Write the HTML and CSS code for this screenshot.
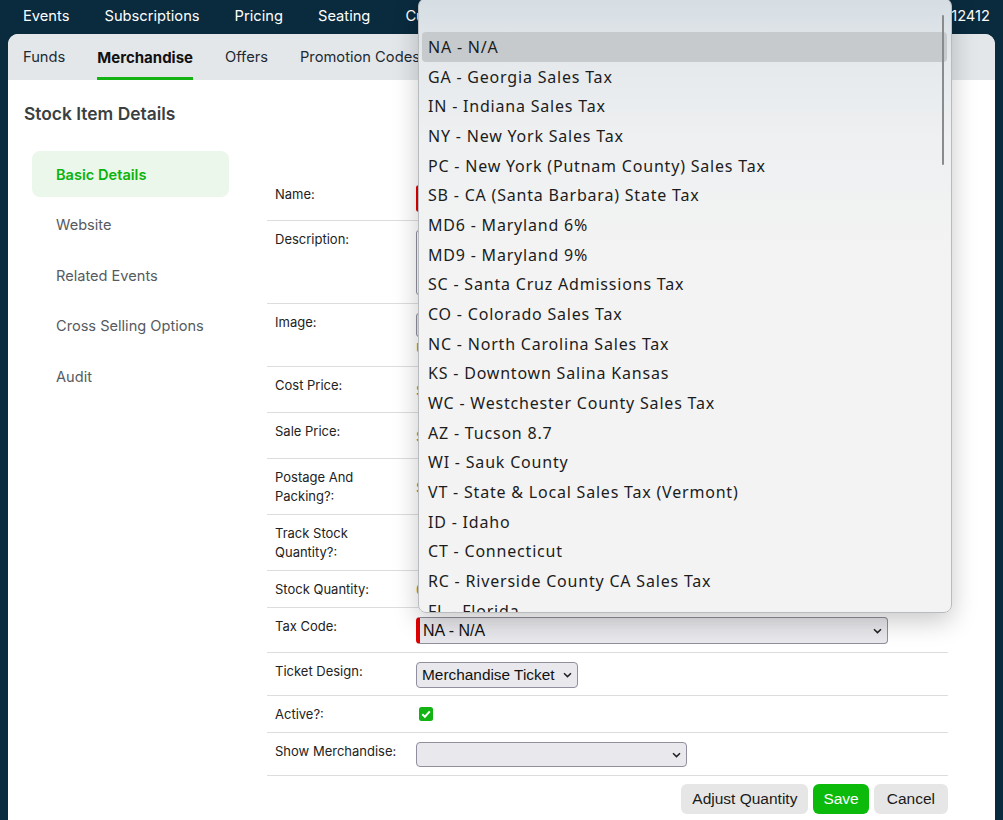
FILE: index.html
```html
<!DOCTYPE html>
<html>
<head>
<meta charset="utf-8">
<link rel="stylesheet" href="styles.css">
</head>
<body>
<nav class="topnav">
  <div class="navitems">
    <span>Events</span>
    <span>Subscriptions</span>
    <span>Pricing</span>
    <span>Seating</span>
    <span>Customers</span>
  </div>
  <span class="navright">Order 112412</span>
</nav>
<div class="panel">
  <div class="tabs">
    <span class="tab">Funds</span>
    <span class="tab active">Merchandise</span>
    <span class="tab">Offers</span>
    <span class="tab">Promotion Codes</span>
  </div>
  <div class="content">
    <aside class="side">
      <h2 class="side-title">Stock Item Details</h2>
      <ul class="menu">
        <li class="menu-item current">Basic Details</li>
        <li class="menu-item">Website</li>
        <li class="menu-item">Related Events</li>
        <li class="menu-item">Cross Selling Options</li>
        <li class="menu-item">Audit</li>
      </ul>
    </aside>
    <main class="form">
      <div class="row"><div class="label">Name:</div><div class="field"><div class="input required"></div></div></div>
      <div class="row"><div class="label">Description:</div><div class="field"><div class="textarea"></div></div></div>
      <div class="row"><div class="label">Image:</div><div class="field"><div class="filebtn"></div><div class="link">Upload</div></div></div>
      <div class="row"><div class="label">Cost Price:</div><div class="field money"><span class="cur">$</span><div class="input short"></div></div></div>
      <div class="row"><div class="label">Sale Price:</div><div class="field money"><span class="cur">$</span><div class="input short"></div></div></div>
      <div class="row"><div class="label">Postage And<br>Packing?:</div><div class="field money"><span class="cur">$</span></div></div>
      <div class="row"><div class="label">Track Stock<br>Quantity?:</div><div class="field"></div></div>
      <div class="row"><div class="label">Stock Quantity:</div><div class="field money"><span class="cur">0</span></div></div>
      <div class="row"><div class="label">Tax Code:</div><div class="field"><div class="select required wide"><span>NA - N/A</span><svg class="chev" width="9" height="6" viewBox="0 0 9 6"><path d="M1 1.2L4.5 4.6L8 1.2" fill="none" stroke="#222" stroke-width="1.5"/></svg></div></div></div>
      <div class="row"><div class="label">Ticket Design:</div><div class="field"><div class="select ticket"><span>Merchandise Ticket</span><svg class="chev" width="9" height="6" viewBox="0 0 9 6"><path d="M1 1.2L4.5 4.6L8 1.2" fill="none" stroke="#222" stroke-width="1.5"/></svg></div></div></div>
      <div class="row"><div class="label">Active?:</div><div class="field"><svg class="check" width="14" height="14" viewBox="0 0 14 14"><rect width="14" height="14" rx="2.5" fill="#12b312"/><path d="M3.3 7.2L5.9 9.7L10.8 4.4" fill="none" stroke="#fff" stroke-width="2"/></svg></div></div>
      <div class="row"><div class="label">Show Merchandise:</div><div class="field"><div class="select show"><span></span><svg class="chev" width="9" height="6" viewBox="0 0 9 6"><path d="M1 1.2L4.5 4.6L8 1.2" fill="none" stroke="#222" stroke-width="1.5"/></svg></div></div></div>
      <div class="actions">
        <button class="btn adjust">Adjust Quantity</button>
        <button class="btn primary">Save</button>
        <button class="btn cancel">Cancel</button>
      </div>
    </main>
  </div>
</div>
<div class="dropdown">
  <div class="scrollbar"></div>
  <div class="opt selected">NA - N/A</div>
  <div class="opt">GA - Georgia Sales Tax</div>
  <div class="opt">IN - Indiana Sales Tax</div>
  <div class="opt">NY - New York Sales Tax</div>
  <div class="opt">PC - New York (Putnam County) Sales Tax</div>
  <div class="opt">SB - CA (Santa Barbara) State Tax</div>
  <div class="opt">MD6 - Maryland 6%</div>
  <div class="opt">MD9 - Maryland 9%</div>
  <div class="opt">SC - Santa Cruz Admissions Tax</div>
  <div class="opt">CO - Colorado Sales Tax</div>
  <div class="opt">NC - North Carolina Sales Tax</div>
  <div class="opt">KS - Downtown Salina Kansas</div>
  <div class="opt">WC - Westchester County Sales Tax</div>
  <div class="opt">AZ - Tucson 8.7</div>
  <div class="opt">WI - Sauk County</div>
  <div class="opt">VT - State &amp; Local Sales Tax (Vermont)</div>
  <div class="opt">ID - Idaho</div>
  <div class="opt">CT - Connecticut</div>
  <div class="opt">RC - Riverside County CA Sales Tax</div>
  <div class="opt">FL - Florida</div>
</div>
</body>
</html>
```
FILE: styles.css
```css
* { box-sizing: border-box; }
html, body { margin: 0; padding: 0; }
body {
  background: #0a2a3e;
  font-family: Inter, "Liberation Sans", sans-serif;
  width: 1003px;
  height: 820px;
  overflow: hidden;
  position: relative;
}
.topnav {
  height: 34px;
  display: flex;
  align-items: center;
  justify-content: space-between;
  padding: 0 13px 2px 23px;
  color: #fff;
  font-size: 14.7px;
}
.navitems { display: flex; gap: 35px; }
.navright { color: #fff; }
.panel {
  margin: 0 8px;
  background: #fff;
  border-radius: 10px 10px 0 0;
  height: 786px;
  overflow: hidden;
}
.tabs {
  height: 46px;
  background: #e3e7ea;
  display: flex;
  gap: 32px;
  padding-left: 15px;
}
.tab {
  display: flex;
  align-items: center;
  font-size: 14.7px;
  color: #1d2a33;
  border-bottom: 3px solid transparent;
  padding-top: 3px;
}
.tab.active {
  font-weight: 700;
  font-size: 15px;
  border-bottom-color: #12b312;
  color: #111;
}
.content {
  display: flex;
  padding-left: 16px;
  gap: 38px;
}
.side { width: 205px; padding-top: 24px; }
.side-title {
  margin: 0;
  font-size: 17.4px;
  line-height: 20px;
  font-weight: 600;
  color: #3b3f42;
}
.menu {
  list-style: none;
  margin: 27px 0 0 8px;
  padding: 0;
}
.menu-item {
  height: 46px;
  display: flex;
  align-items: center;
  padding: 2px 0 0 24px;
  font-size: 14.6px;
  color: #555b60;
  border-radius: 8px;
  margin-bottom: 4.4px;
}
.menu-item.current {
  background: #ecf7ec;
  color: #0bb30b;
  font-weight: 600;
}
.form { width: 681px; padding-top: 96px; }
.row {
  display: flex;
  border-bottom: 1px solid #dcdddf;
  padding: 9px 0 8px;
}
.label {
  width: 149px;
  padding: 0 0 0 8px;
  font-size: 13px;
  line-height: 19px;
  color: #222;
  flex-shrink: 0;
}
.field { flex: 1; display: flex; flex-direction: column; align-items: flex-start; }
.field.money { flex-direction: row; align-items: center; gap: 6px; }
.cur { color: #c8781b; font-size: 14px; line-height: 19px; }
.input {
  width: 470px;
  height: 27px;
  border: 1px solid #8f8f9d;
  border-radius: 3px;
  background: #fff;
}
.input.short { width: 200px; height: 28px; }
.required { border-left: 4px solid #e00000; }
.textarea {
  width: 470px;
  height: 65px;
  border: 1px solid #8f8f9d;
  border-radius: 3px;
}
.filebtn {
  width: 90px;
  height: 24px;
  border: 1px solid #8f8f9d;
  background: #e9e9ed;
  border-radius: 3px;
}
.link { color: #c8781b; font-size: 13px; line-height: 19px; margin-top: 2px; }
.select {
  display: flex;
  align-items: center;
  justify-content: space-between;
  background: #e9e9ed;
  border: 1px solid #8f8f9d;
  border-radius: 4px;
  font-family: "Liberation Sans", Arial, sans-serif;
  font-size: 16px;
  color: #111;
  padding: 0 5px 0 5px;
}
.select.required { border-left: 4px solid #e00000; padding-left: 3px; }
.select.wide { width: 472px; height: 27px; }
.select.ticket { width: 162px; height: 26px; font-size: 15.4px; margin-bottom: -1px; }
.select.show { width: 271px; height: 25px; }
.chev { flex-shrink: 0; }
.check { margin: 2px 0 0 3px; }
.actions {
  display: flex;
  justify-content: flex-end;
  gap: 5px;
  padding-top: 8px;
}
.btn {
  height: 30px;
  border: none;
  border-radius: 6px;
  background: #e6e6e6;
  font-family: "Liberation Sans", Arial, sans-serif;
  font-size: 15.5px;
  color: #1a1a1a;
  padding: 0 10px;
}
.btn.adjust { padding: 0 11px; }
.btn.cancel { padding: 0 13px; }
.btn.primary { background: #0cba0c; color: #fff; }
.dropdown {
  position: absolute;
  left: 418px;
  top: -2px;
  width: 534px;
  height: 615px;
  padding-top: 33px;
  border: 1px solid #b9bcbf;
  border-radius: 8px;
  overflow: hidden;
  background: linear-gradient(180deg, #d5dde3 0px, #e5e9ec 60px, #eef0f1 140px, #f3f3f3 260px, #f3f3f3 100%);
  box-shadow: 0 8px 26px rgba(0, 0, 0, 0.22);
  font-family: "Noto Sans", "Open Sans", sans-serif;
  font-size: 16px;
  letter-spacing: 0.8px;
  color: #1c1c1c;
}
.opt {
  height: 29.68px;
  display: flex;
  align-items: center;
  margin: 0 4px 0 3px;
  padding-left: 6px;
  border-radius: 4px;
  white-space: nowrap;
}
.opt.selected { background: #c6cacd; }
.scrollbar {
  position: absolute;
  right: 7px;
  top: 16px;
  width: 2px;
  height: 150px;
  background: #8a8b8c;
  border-radius: 1px;
}
```
